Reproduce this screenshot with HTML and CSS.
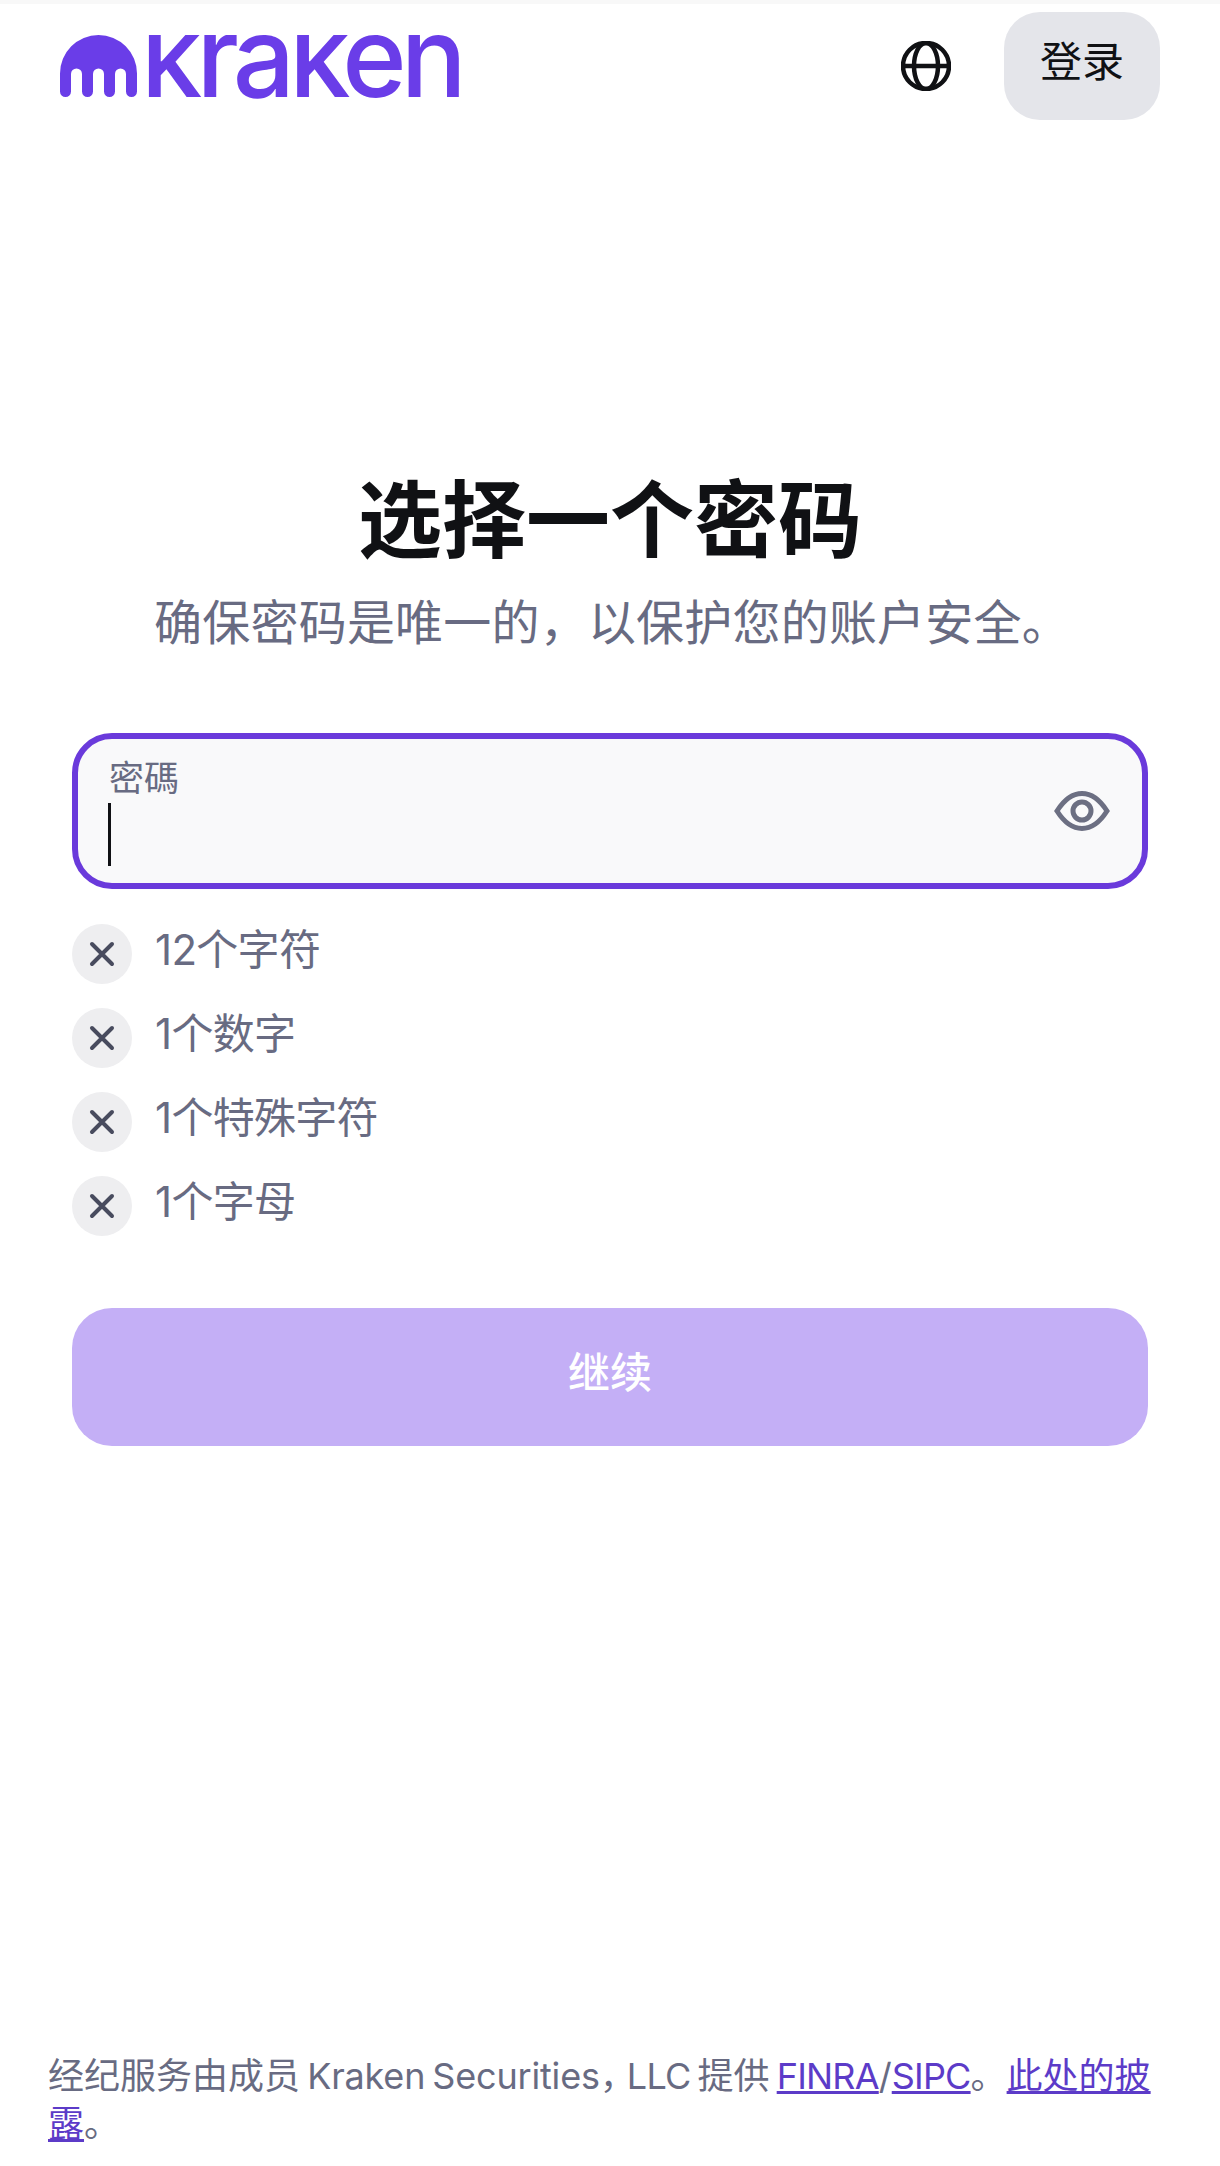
FILE: index.html
```html
<!DOCTYPE html>
<html lang="zh-CN">
<head>
  <meta charset="utf-8">
  <title>选择一个密码</title>
  <link rel="stylesheet" href="styles.css">
</head>
<body>
  <header class="top">
    <svg class="logo" width="410" height="110" viewBox="0 -31 410 110">
      <defs>
        <clipPath id="wordClip"><rect x="88" y="0" width="322" height="64"/></clipPath>
      </defs>
      <path d="M0 38.5A38.5 38.5 0 0 1 77 38.5V56.5a5.5 5.5 0 0 1-11 0V39a5.5 5.5 0 0 0-11 0V56.5a5.5 5.5 0 0 1-11 0V39a5.5 5.5 0 0 0-11 0V56.5a5.5 5.5 0 0 1-11 0V39a5.5 5.5 0 0 0-11 0V56.5a5.5 5.5 0 0 1-11 0Z"/>
      <g clip-path="url(#wordClip)">
        <text class="logo-word" x="81" y="62" textLength="320" lengthAdjust="spacingAndGlyphs">kraken</text>
      </g>
    </svg>
    <div class="top-right">
      <svg class="globe" width="50" height="50" viewBox="0 0 50 50">
        <circle cx="25" cy="25" r="23"/>
        <ellipse cx="25" cy="25" rx="12" ry="23"/>
        <path d="M2 25H48"/>
      </svg>
      <a class="login" href="#">登录</a>
    </div>
  </header>

  <main class="content">
    <h1>选择一个密码</h1>
    <p class="sub">确保密码是唯一的，以保护您的账户安全。</p>

    <div class="field">
      <div class="field-text">
        <label>密碼</label>
        <span class="caret"></span>
      </div>
      <svg class="eye" width="56" height="42" viewBox="0 0 56 42">
        <path d="M3 21C10 10 18 3.500 28 3.500S46 10 53 21C46 32 38 38.500 28 38.500S10 32 3 21Z"/>
        <circle cx="28" cy="21" r="9"/>
      </svg>
    </div>

    <ul class="rules">
      <li><span class="x"><svg width="26" height="26" viewBox="0 0 26 26"><path d="M3 3L23 23M23 3L3 23"/></svg></span><span class="rule-text">12个字符</span></li>
      <li><span class="x"><svg width="26" height="26" viewBox="0 0 26 26"><path d="M3 3L23 23M23 3L3 23"/></svg></span><span class="rule-text">1个数字</span></li>
      <li><span class="x"><svg width="26" height="26" viewBox="0 0 26 26"><path d="M3 3L23 23M23 3L3 23"/></svg></span><span class="rule-text">1个特殊字符</span></li>
      <li><span class="x"><svg width="26" height="26" viewBox="0 0 26 26"><path d="M3 3L23 23M23 3L3 23"/></svg></span><span class="rule-text">1个字母</span></li>
    </ul>

    <button class="next" type="button">继续</button>
  </main>

  <footer class="foot">
    经纪服务由成员 <span class="lat">Kraken Securities</span><span class="comma">，</span><span class="cap">LLC</span> 提供 <a class="cap" href="#">FINRA</a>/<a class="cap" href="#">SIPC</a>。<a href="#">此处的披露</a>。
  </footer>
</body>
</html>
```

FILE: styles.css
```css
html, body {
  margin: 0;
  padding: 0;
}
body {
  width: 1220px;
  height: 2166px;
  display: flex;
  flex-direction: column;
  background: #fff;
  color: #686b82;
  font-family: Inter, "Noto Sans CJK SC", sans-serif;
  box-sizing: border-box;
  border-top: 4px solid #f8f8f8;
  overflow: hidden;
}

/* header */
.top {
  display: flex;
  justify-content: space-between;
  align-items: flex-start;
  padding: 8px 60px 0 60px;
  height: 108px;
}
.logo {
  margin-top: -8px;
  display: block;
}
.logo path {
  fill: #6a3de8;
}
.logo-word {
  fill: #6a3de8;
  font-family: Inter, sans-serif;
  font-weight: 500;
  font-size: 113px;
  letter-spacing: -6px;
}
.top-right {
  display: flex;
  align-items: center;
  gap: 53px;
}
.globe {
  fill: none;
  stroke: #101114;
  stroke-width: 4.5;
}
.login {
  width: 156px;
  height: 108px;
  border-radius: 36px;
  background: #e4e5ea;
  color: #101114;
  font-size: 42px;
  line-height: 100px;
  text-align: center;
  text-decoration: none;
}

/* form */
.content {
  padding: 349px 72px 0 72px;
}
h1 {
  margin: 0;
  color: #101114;
  font-size: 84px;
  font-weight: 700;
  line-height: 104px;
  text-align: center;
}
.sub {
  margin: 16px 0 0 0;
  padding-left: 4px;
  font-size: 48px;
  line-height: 68px;
  letter-spacing: 0.2px;
  text-align: center;
}
.field {
  box-sizing: border-box;
  height: 156px;
  margin-top: 76px;
  padding: 0 32px 0 32px;
  display: flex;
  align-items: center;
  justify-content: space-between;
  border: 6px solid #6a3adb;
  border-radius: 40px;
  background: #f9f9fa;
}
.field-text {
  display: flex;
  flex-direction: column;
  align-items: flex-start;
}
.field label {
  font-size: 35px;
  line-height: 44px;
  margin-left: -1px;
}
.caret {
  width: 3px;
  height: 63px;
  margin-left: -2px;
  margin-top: 3px;
  background: #101114;
}
.eye {
  fill: none;
  stroke: #6c6f82;
  stroke-width: 5;
}
.rules {
  list-style: none;
  margin: 35px 0 0 0;
  padding: 0;
}
.rules li {
  display: flex;
  align-items: center;
  height: 60px;
  margin-bottom: 24px;
  font-size: 42px;
  line-height: 50px;
  letter-spacing: -0.7px;
}
.rule-text {
  margin-bottom: 8px;
}
.x {
  flex: none;
  width: 60px;
  height: 60px;
  margin-right: 23px;
  border-radius: 50%;
  background: #eeeef0;
  display: flex;
  align-items: center;
  justify-content: center;
}
.x svg {
  fill: none;
  stroke: #484b5e;
  stroke-width: 4;
  stroke-linecap: round;
}
.next {
  display: block;
  width: 100%;
  height: 138px;
  margin-top: 72px;
  padding: 0 0 16px 0;
  border: 0;
  border-radius: 40px;
  background: #c4aff6;
  color: #fff;
  font-family: inherit;
  font-size: 42px;
  font-weight: 500;
}

/* footer */
.foot {
  margin-top: auto;
  padding: 0 50px 18px 48px;
  font-size: 36px;
  line-height: 48px;
  word-spacing: -3px;
}
.foot a {
  color: #5c3bc8;
  text-decoration: underline;
}
.lat {
  letter-spacing: -0.17px;
}
.cap {
  letter-spacing: -0.8px;
}
.comma {
  margin-right: -9px;
}
```
